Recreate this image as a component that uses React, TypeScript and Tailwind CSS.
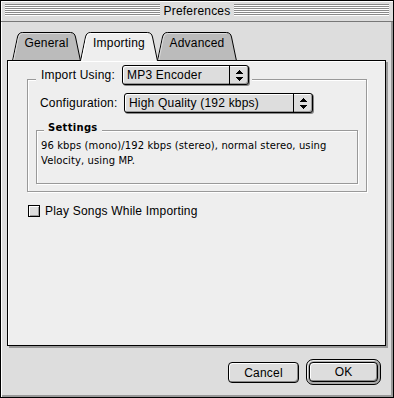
import React from "react";

function Tab({ label, w, wClass, selected, first }: { label: string; w: number; wClass: string; selected?: boolean; first?: boolean }) {
  const d = `M0.5,29 L5.5,5 Q6.5,0.5 10.5,0.5 L${w - 10.5},0.5 Q${w - 6.5},0.5 ${w - 5.5},5 L${w - 0.5},29`;
  return (
    <div className={`relative h-[29px] ${wClass} ${selected ? "z-20" : "z-10"} ${first ? "" : "-ml-px"}`}>
      <svg className="absolute inset-0" width={w} height={29} viewBox={`0 0 ${w} 29`}>
        {selected ? (
          <>
            <path d={d + " Z"} fill="#eeeeee" stroke="none" />
            <path d={d} fill="none" stroke="#000" strokeWidth={1} />
            <path d={`M1.8,29 L6.6,5.2 Q7.5,1.5 10.5,1.5 L${w - 10.5},1.5`} fill="none" stroke="#ffffff" strokeWidth={1} />
          </>
        ) : (
          <>
            <path d={d + " Z"} fill="#bbbbbb" stroke="none" />
            <path d={d} fill="none" stroke="#000" strokeWidth={1} />
            <path d={`M1.8,28 L6.6,5.2 Q7.5,1.5 10.5,1.5 L${w - 10.5},1.5`} fill="none" stroke="#dddddd" strokeWidth={1} />
            <line x1={0} y1={28.5} x2={w} y2={28.5} stroke="#000" strokeWidth={1} />
          </>
        )}
      </svg>
      <div className="relative pt-[4px] text-center leading-[14px]">{label}</div>
    </div>
  );
}

function Arrows() {
  return (
    <svg width="7" height="11" viewBox="0 0 7 11" shapeRendering="crispEdges">
      <polygon points="3.5,0 7,4 0,4" fill="#000" />
      <polygon points="0,7 7,7 3.5,11" fill="#000" />
    </svg>
  );
}

function Popup({ label, wClass }: { label: string; wClass: string }) {
  return (
    <div className={`flex h-[20px] ${wClass} rounded-[3px] border border-black bg-[#dddddd] shadow-[inset_1px_1px_0_#ffffff,inset_-1px_-1px_0_#999999,1px_1px_0_#888888]`}>
      <div className="flex-1 flex items-center pl-[4px] leading-[14px] whitespace-nowrap">{label}</div>
      <div className="w-[19px] flex items-center justify-center border-l border-black">
        <Arrows />
      </div>
    </div>
  );
}

export default function App() {
  const stripes =
    "flex-1 h-[12px] mt-[3px] bg-[image:repeating-linear-gradient(to_bottom,#8a8a8a_0px,#8a8a8a_1px,#ffffff_1px,#ffffff_2px)]";
  return (
    <div className="w-[394px] h-[398px] border border-black bg-[#dddddd] flex flex-col text-[12px] tracking-[0.2px] text-black font-['Liberation_Sans',Arial,sans-serif] shadow-[inset_1px_1px_0_#ffffff,inset_-2px_-2px_0_#999999] overflow-hidden">
      {/* Title bar */}
      <div className="h-[21px] flex items-start px-[4px] border-b border-[#777777] bg-[#dddddd] shadow-[inset_1px_1px_0_#ffffff]">
        <div className={stripes} />
        <span className="px-[4px] mt-[3px] leading-[14px] whitespace-nowrap">Preferences</span>
        <div className={stripes} />
      </div>

      {/* Body */}
      <div className="flex flex-col pt-[10px]">
        <div className="relative z-10 flex ml-[11px] -mb-px">
          <Tab label="General" w={69} wClass="w-[69px]" first />
          <Tab label="Importing" w={78} wClass="w-[78px]" selected />
          <Tab label="Advanced" w={80} wClass="w-[80px]" />
        </div>

        <div className="relative z-0 ml-[6px] w-[379px] h-[286px] border border-black bg-[#eeeeee] shadow-[inset_1px_1px_0_#ffffff,2px_2px_0_#999999] pl-[19px] pt-[4px]">
          {/* Import Using group */}
          <div className="w-[340px]">
            <div className="relative z-10 ml-[9px] flex items-center h-[20px] w-fit bg-[#eeeeee] pl-[5px] pr-[3px]">
              <span className="w-[81px] leading-[14px] whitespace-nowrap">Import Using:</span>
              <Popup label="MP3 Encoder" wClass="w-[127px]" />
            </div>
            <div className="-mt-[6px] border border-[#999999] shadow-[inset_1px_1px_0_#ffffff,1px_1px_0_#ffffff] pt-[13px] px-[8px] pb-[7px]">
              <div className="flex items-center pl-[4px] h-[20px]">
                <span className="w-[84px] leading-[14px] whitespace-nowrap">Configuration:</span>
                <Popup label="High Quality (192 kbps)" wClass="w-[189px]" />
              </div>

              <div className="mt-[9px] relative z-10 ml-[8px] px-[4px] h-[12px] w-fit bg-[#eeeeee] leading-[12px] text-[10px] tracking-[0.3px] font-bold font-['DejaVu_Sans',sans-serif]">
                Settings
              </div>
              <div className="-mt-[4px] h-[54px] border border-[#999999] shadow-[inset_1px_1px_0_#ffffff,1px_1px_0_#ffffff] pl-[4px] pt-[7px] text-[10px] tracking-[0.1px] leading-[15px] font-['DejaVu_Sans',sans-serif]">
                <div>96 kbps (mono)/192 kbps (stereo), normal stereo, using</div>
                <div>Velocity, using MP.</div>
              </div>
            </div>
          </div>

          {/* Checkbox */}
          <div className="mt-[13px] ml-[1px] flex items-center h-[12px] gap-[5px]">
            <div className="w-[12px] h-[12px] border border-black bg-[#dddddd] shadow-[inset_1px_1px_0_#ffffff,inset_-1px_-1px_0_#999999]" />
            <span className="leading-[12px] whitespace-nowrap">Play Songs While Importing</span>
          </div>
        </div>

        {/* Buttons */}
        <div className="mt-[13px] flex justify-end items-start gap-[7px] pr-[12px]">
          <div className="mt-[3px] w-[71px] h-[21px] rounded-[4px] border border-black bg-[#dddddd] shadow-[inset_1px_1px_0_#ffffff,inset_-1px_-1px_0_#888888] flex items-center justify-center leading-[14px]">
            Cancel
          </div>
          <div className="w-[75px] h-[26px] rounded-[7px] border border-black bg-[#aaaaaa] shadow-[inset_1px_1px_0_#eeeeee] p-[2px]">
            <div className="h-full rounded-[4px] border border-black bg-[#dddddd] shadow-[inset_1px_1px_0_#ffffff,inset_-1px_-1px_0_#888888] flex items-center justify-center leading-[14px]">
              OK
            </div>
          </div>
        </div>
      </div>
    </div>
  );
}
